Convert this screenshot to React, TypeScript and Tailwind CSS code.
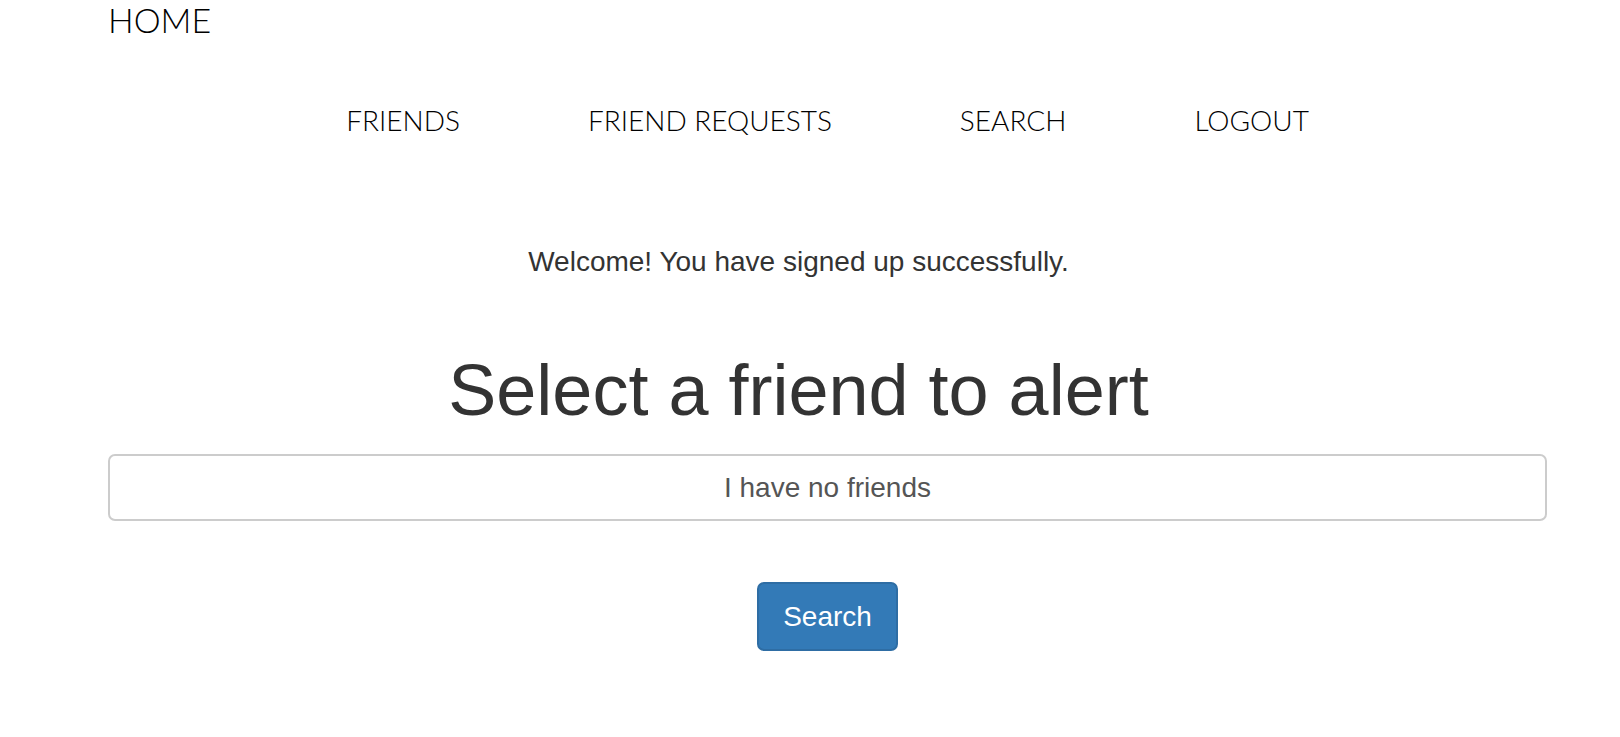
const navItems = ["FRIENDS", "FRIEND REQUESTS", "SEARCH", "LOGOUT"];

const App = () => {
    return (
        <div className="min-h-screen bg-white">
            <div className="ml-[108px] w-[1439px]">
                <div className="font-['Lato',sans-serif] text-[34px] font-light leading-[40px] text-black">
                    HOME
                </div>
                <nav className="mt-[61px] flex justify-center gap-[128px] font-['Lato',sans-serif] text-[28px] font-light leading-[38px] text-black">
                    {navItems.map((item) => (
                        <a key={item} href="#" className="block">
                            {item}
                        </a>
                    ))}
                </nav>
                <div className="pr-[58px] text-center font-['Liberation_Sans',Arial,sans-serif] text-[#333]">
                    <p className="mt-[103px] text-[28px] leading-[40px]">
                        Welcome! You have signed up successfully.
                    </p>
                    <h1 className="mt-[68px] text-[72px] leading-[80px]">
                        Select a friend to alert
                    </h1>
                </div>
                <div className="mt-[24px] flex h-[67px] items-center justify-center rounded-[7px] border-2 border-[#ccc] font-['Liberation_Sans',Arial,sans-serif] text-[28px] text-[#555]">
                    I have no friends
                </div>
                <div className="mt-[61px] flex justify-center">
                    <button className="rounded-[7px] border-2 border-[#2e6da4] bg-[#337ab7] px-6 py-3 font-['Liberation_Sans',Arial,sans-serif] text-[28px] leading-[41px] text-white">
                        Search
                    </button>
                </div>
            </div>
        </div>
    );
};

export default App;
